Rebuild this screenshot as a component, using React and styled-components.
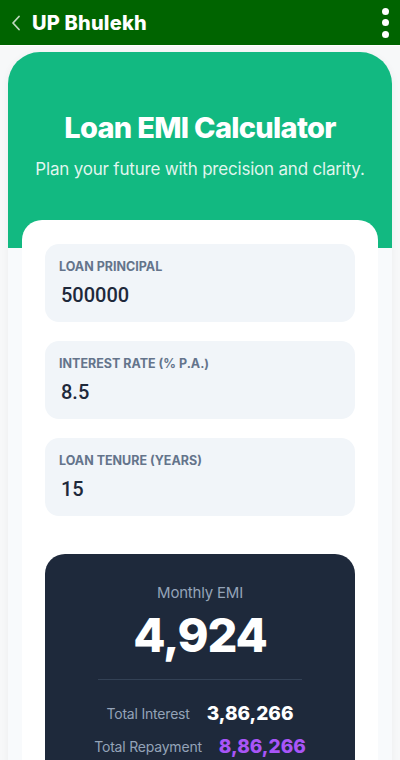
import React from "react";
import styled, { createGlobalStyle } from "styled-components";

const GlobalStyle = createGlobalStyle`
  body {
    margin: 0;
    background: #f7f8f9;
    font-family: Inter, "Open Sans", sans-serif;
  }
`;

const TopBar = styled.header`
  height: 45px;
  background: #006400;
  display: flex;
  align-items: center;
  padding: 0 10px 0 6px;
  border-bottom: 1px solid #ffffff;
`;

const BackButton = styled.button`
  background: none;
  border: none;
  padding: 0;
  width: 20px;
  height: 24px;
  display: flex;
  align-items: center;
  justify-content: center;
  cursor: pointer;
`;

const AppTitle = styled.h1`
  margin: 0 0 0 6px;
  flex: 1;
  color: #ffffff;
  font-size: 20px;
  font-weight: 800;
  letter-spacing: 0.2px;
`;

const MenuButton = styled.button`
  background: none;
  border: none;
  padding: 0;
  width: 10px;
  height: 30px;
  display: flex;
  flex-direction: column;
  align-items: center;
  justify-content: space-between;
  cursor: pointer;
`;

const Dot = styled.span`
  width: 7px;
  height: 7px;
  border-radius: 50%;
  background: #ffffff;
`;

const Main = styled.main`
  padding: 6px 8px 0;
`;

const Shell = styled.section`
  background: #f8fafc;
  border-radius: 32px 32px 0 0;
  overflow: hidden;
  box-shadow: 0 2px 8px rgba(15, 23, 42, 0.05);
`;

const Hero = styled.div`
  background: #12b981;
  padding: 59px 16px 68px;
  text-align: center;
  color: #ffffff;
`;

const HeroTitle = styled.h2`
  margin: 0;
  font-size: 29px;
  line-height: 34px;
  font-weight: 800;
  letter-spacing: -0.7px;
`;

const HeroSub = styled.p`
  margin: 13px 0 0;
  font-size: 17px;
  line-height: 22px;
  font-weight: 400;
  color: rgba(255, 255, 255, 0.88);
  letter-spacing: -0.2px;
`;

const Card = styled.div`
  margin: -28px 14px 0;
  position: relative;
  background: #ffffff;
  border-radius: 20px 20px 0 0;
  padding: 24px 23px 0;
  display: flex;
  flex-direction: column;
  gap: 19px;
`;

const Field = styled.label`
  display: flex;
  flex-direction: column;
  gap: 8px;
  height: 78px;
  box-sizing: border-box;
  padding: 15px 14px 15px;
  background: #f1f5f9;
  border-radius: 14px;
`;

const FieldLabel = styled.span`
  font-size: 12.5px;
  line-height: 16px;
  font-weight: 700;
  color: #64748b;
  letter-spacing: 0;
`;

const FieldInput = styled.input`
  border: none;
  background: transparent;
  padding: 0 0 0 2px;
  margin: 0;
  outline: none;
  font-family: Roboto, Inter, sans-serif;
  font-size: 20px;
  line-height: 24px;
  height: 24px;
  font-weight: 500;
  color: #1e293b;
`;

const ResultCard = styled.div`
  margin-top: 19px;
  background: #1e293b;
  border-radius: 20px 20px 0 0;
  padding: 29px 0 0;
  display: flex;
  flex-direction: column;
  align-items: center;
  height: 220px;
  box-sizing: border-box;
`;

const ResultLabel = styled.div`
  font-size: 15px;
  line-height: 20px;
  color: #94a3b8;
  letter-spacing: -0.2px;
`;

const ResultValue = styled.div`
  margin-top: 4px;
  font-size: 47px;
  line-height: 56px;
  font-weight: 800;
  color: #ffffff;
  letter-spacing: -1.2px;
`;

const Divider = styled.hr`
  width: 204px;
  border: none;
  border-top: 1px solid #334155;
  margin: 16px 0 21px;
`;

const StatRow = styled.div`
  display: flex;
  align-items: center;
  gap: 17px;
  height: 24px;
  & + & {
    margin-top: 9px;
  }
`;

const StatLabel = styled.span`
  font-size: 14px;
  color: #94a3b8;
  letter-spacing: -0.2px;
`;

const StatValue = styled.span`
  font-size: 19px;
  font-weight: 800;
  color: ${(p) => (p.accent ? "#a855f7" : "#ffffff")};
  letter-spacing: 0;
`;

const fields = [
  { label: "LOAN PRINCIPAL", value: "500000" },
  { label: "INTEREST RATE (% P.A.)", value: "8.5" },
  { label: "LOAN TENURE (YEARS)", value: "15" },
];

export default function App() {
  return (
    <>
      <GlobalStyle />
      <TopBar>
        <BackButton aria-label="Back">
          <svg width="10" height="16" viewBox="0 0 10 16">
            <polyline
              points="8,1.5 2,8 8,14.5"
              fill="none"
              stroke="rgba(255,255,255,0.75)"
              strokeWidth="1.8"
              strokeLinecap="round"
              strokeLinejoin="round"
            />
          </svg>
        </BackButton>
        <AppTitle>UP Bhulekh</AppTitle>
        <MenuButton aria-label="Menu">
          <Dot />
          <Dot />
          <Dot />
        </MenuButton>
      </TopBar>
      <Main>
        <Shell>
          <Hero>
            <HeroTitle>Loan EMI Calculator</HeroTitle>
            <HeroSub>Plan your future with precision and clarity.</HeroSub>
          </Hero>
          <Card>
            {fields.map((f) => (
              <Field key={f.label}>
                <FieldLabel>{f.label}</FieldLabel>
                <FieldInput defaultValue={f.value} />
              </Field>
            ))}
            <ResultCard>
              <ResultLabel>Monthly EMI</ResultLabel>
              <ResultValue>4,924</ResultValue>
              <Divider />
              <StatRow>
                <StatLabel>Total Interest</StatLabel>
                <StatValue>3,86,266</StatValue>
              </StatRow>
              <StatRow>
                <StatLabel>Total Repayment</StatLabel>
                <StatValue accent>8,86,266</StatValue>
              </StatRow>
            </ResultCard>
          </Card>
        </Shell>
      </Main>
    </>
  );
}
